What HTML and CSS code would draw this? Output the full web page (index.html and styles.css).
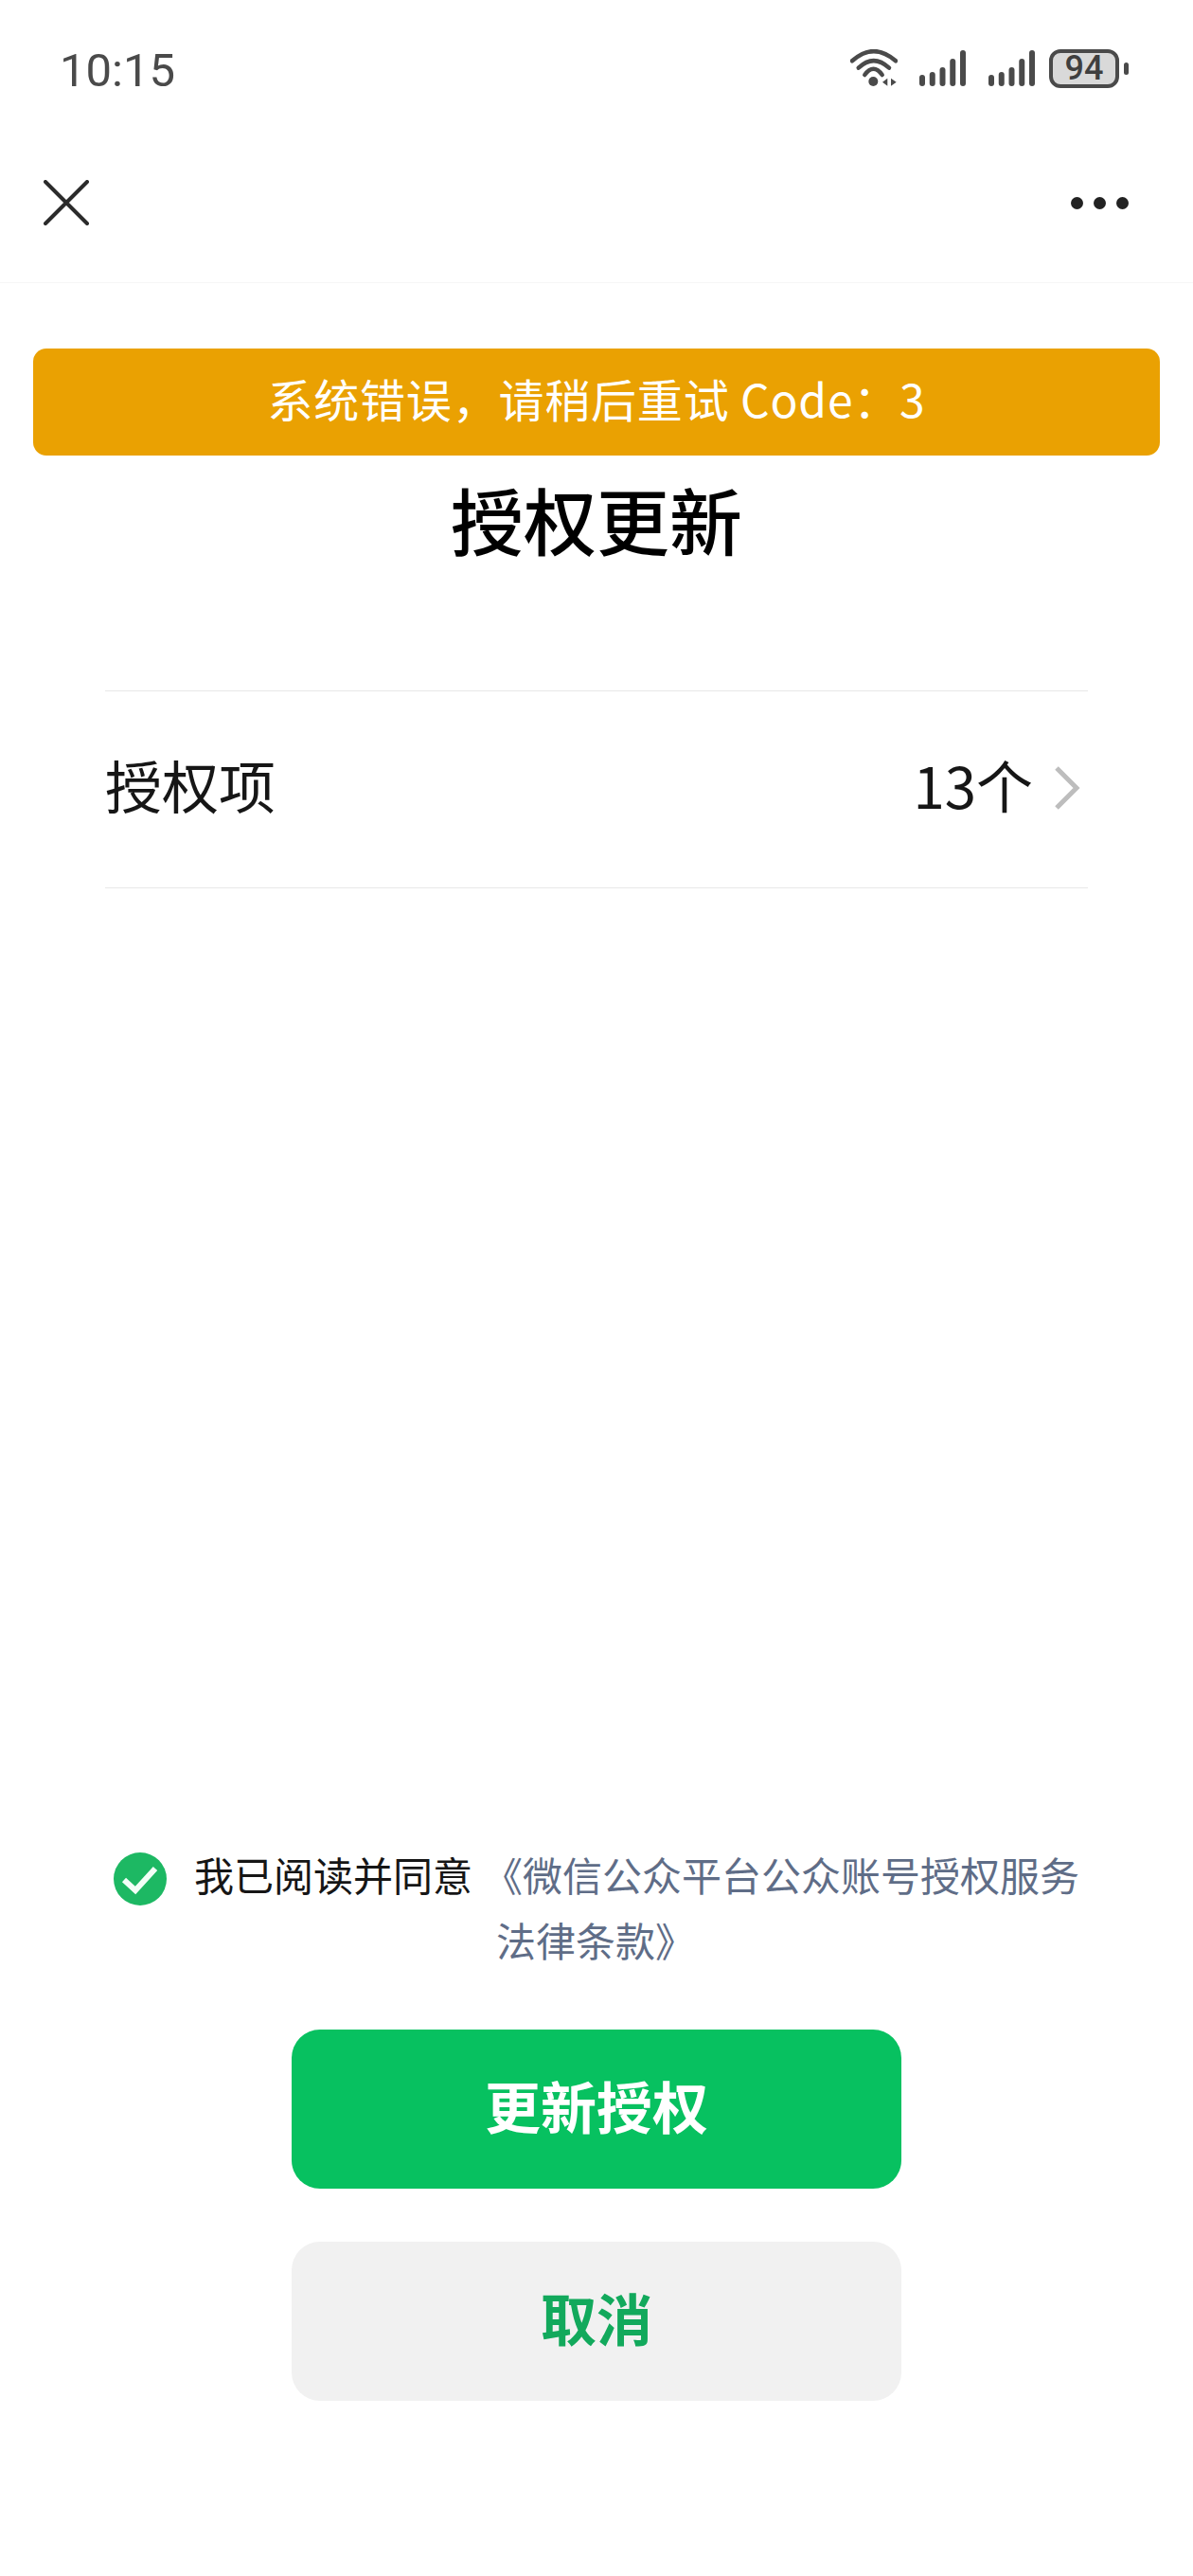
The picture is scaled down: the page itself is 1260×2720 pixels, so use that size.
FILE: index.html
```html
<!DOCTYPE html>
<html lang="zh-CN">
<head>
  <meta charset="UTF-8">
  <meta name="viewport" content="width=device-width, initial-scale=1.0">
  <title>授权更新</title>
  <link rel="stylesheet" href="styles.css">
</head>
<body>
  <div class="page">
    <div class="status-bar">
      <span class="time">10:15</span>
      <div class="status-icons">
        <svg class="wifi" width="50" height="40" viewBox="0 0 50 40" fill="none" stroke="#4a4a4a" stroke-width="4.500" stroke-linecap="round">
          <path d="M2 12.300 Q24.700 -8 48 12.300"/>
          <path d="M8.700 19.700 Q24.700 4.500 41 19.700"/>
          <path d="M15.300 27 Q24.500 14.500 33.700 27"/>
          <circle cx="24.300" cy="34" r="5" fill="#4a4a4a" stroke="none"/>
          <path d="M39.300 30.700 V38.700 L34 34.700 Z M43 30.700 V38.700 L48.700 34.700 Z" fill="#4a4a4a" stroke="none"/>
        </svg>
        <svg class="signal" width="50" height="40" viewBox="0 0 50 40" fill="#4a4a4a">
          <rect x="0" y="27" width="6" height="12" rx="3"/>
          <rect x="10.750" y="24" width="6" height="15" rx="3"/>
          <rect x="21.500" y="19" width="6" height="20" rx="3"/>
          <rect x="32.250" y="10" width="6" height="29" rx="3"/>
          <rect x="43" y="1" width="6" height="38" rx="3"/>
        </svg>
        <svg class="signal" width="50" height="40" viewBox="0 0 50 40" fill="#4a4a4a">
          <rect x="0" y="27" width="6" height="12" rx="3"/>
          <rect x="10.750" y="24" width="6" height="15" rx="3"/>
          <rect x="21.500" y="19" width="6" height="20" rx="3"/>
          <rect x="32.250" y="10" width="6" height="29" rx="3"/>
          <rect x="43" y="1" width="6" height="38" rx="3"/>
        </svg>
        <div class="battery"><span class="battery-level">94</span></div>
        <span class="battery-nub"></span>
      </div>
    </div>

    <div class="nav">
      <svg width="48" height="48" viewBox="0 0 48 48" stroke="#2b2b2b" stroke-width="4" stroke-linecap="round">
        <path d="M2 2 L46 46 M46 2 L2 46"/>
      </svg>
      <div class="more"><span></span><span></span><span></span></div>
    </div>

    <div class="toast">系统错误，请稍后重试 Code：3</div>
    <h1 class="title">授权更新</h1>

    <div class="auth-row">
      <span>授权项</span>
      <div class="auth-count">
        <span>13个</span>
        <svg class="chevron" width="28" height="46" viewBox="0 0 28 46" fill="none" stroke="#bdbdbd" stroke-width="5">
          <path d="M3 2 L24 23 L3 44"/>
        </svg>
      </div>
    </div>

    <div class="spacer"></div>

    <div class="agree">
      <svg class="check" width="56" height="56" viewBox="0 0 56 56">
        <circle cx="28" cy="28" r="28" fill="#1db863"/>
        <path d="M11 29 L23 40 L44 17" fill="none" stroke="#f2fff7" stroke-width="6"/>
      </svg>
      <span class="agree-text">我已阅读并同意</span>
      <span class="agree-link">《微信公众平台公众账号授权服务法律条款》</span>
    </div>

    <div class="actions">
      <button class="btn btn-primary">更新授权</button>
      <button class="btn btn-cancel">取消</button>
    </div>
  </div>
</body>
</html>
```

FILE: styles.css
```css
* {
  box-sizing: border-box;
}
body {
  margin: 0;
  background: #fff;
  color: #111;
  font-family: "Noto Sans CJK SC", "Noto Sans", sans-serif;
}
.page {
  display: flex;
  flex-direction: column;
  width: 1260px;
  height: 2720px;
  padding-bottom: 185px;
}
.status-bar {
  display: flex;
  justify-content: space-between;
  align-items: center;
  height: 144px;
  padding: 0 68px 0 63px;
}
.time {
  padding-top: 4px;
  font-family: Roboto, sans-serif;
  font-size: 49px;
  color: #4a4a4a;
}
.status-icons {
  display: flex;
  align-items: center;
}
.wifi {
  margin-right: 23px;
}
.signal {
  margin-right: 23px;
}
.signal + .signal {
  margin-right: 14px;
}
.battery {
  display: flex;
  justify-content: center;
  align-items: center;
  width: 74px;
  height: 41px;
  border: 4px solid #4a4a4a;
  border-radius: 12px;
  background: #d9d9d9;
}
.battery-level {
  font-family: Roboto, sans-serif;
  font-size: 36px;
  font-weight: 500;
  line-height: 33px;
  color: #3f3f3f;
}
.battery-nub {
  width: 5px;
  height: 13px;
  margin-left: 5px;
  border-radius: 3px;
  background: #4a4a4a;
}
.nav {
  display: flex;
  justify-content: space-between;
  align-items: center;
  height: 155px;
  padding: 0 68px 14px 46px;
  border-bottom: 1px solid #f6f6f6;
}
.more {
  display: flex;
  gap: 11px;
}
.more span {
  width: 13px;
  height: 13px;
  border-radius: 50%;
  background: #222;
}
.toast {
  margin: 69px 35px 0;
  height: 113px;
  line-height: 105px;
  border-radius: 14px;
  background: #eaa102;
  color: #fff;
  font-size: 48px;
  letter-spacing: 0.8px;
  text-align: center;
}
.title {
  margin: 19px 0 0;
  font-size: 77px;
  font-weight: 500;
  line-height: 96px;
  color: #000;
  text-align: center;
}
.auth-row {
  display: flex;
  justify-content: space-between;
  align-items: center;
  height: 209px;
  margin: 133px 111px 0 111px;
  padding-bottom: 12px;
  border-top: 1px solid #e8e8e8;
  border-bottom: 1px solid #e8e8e8;
  font-size: 60px;
  color: #161616;
}
.auth-count {
  display: flex;
  align-items: center;
  gap: 22px;
  padding-right: 8px;
}
.chevron {
  margin-top: 8px;
}
.spacer {
  flex: 1;
}
.agree {
  display: flex;
  align-items: flex-start;
  padding: 0 110px 5px 120px;
  font-size: 42px;
  line-height: 69px;
}
.check {
  flex: none;
  margin: 12px 29px 0 0;
}
.agree-text {
  flex: none;
  margin-right: 25px;
  color: #161616;
}
.agree-link {
  text-indent: -14px;
  color: #5f6d87;
}
.actions {
  display: flex;
  flex-direction: column;
  align-items: center;
  gap: 56px;
  margin-top: 56px;
}
.btn {
  width: 644px;
  height: 168px;
  padding-bottom: 10px;
  border: 0;
  border-radius: 30px;
  font-family: inherit;
  font-size: 59px;
  font-weight: 700;
}
.btn-primary {
  background: #07c160;
  color: #fff;
}
.btn-cancel {
  background: #f1f1f1;
  color: #12a95c;
}
```
